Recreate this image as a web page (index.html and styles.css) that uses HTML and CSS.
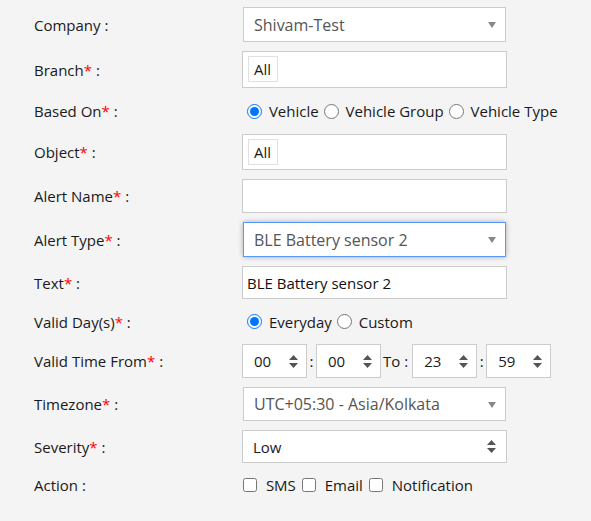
FILE: index.html
```html
<!DOCTYPE html>
<html lang="en">

<head>
    <meta charset="UTF-8">
    <meta name="viewport" content="width=device-width, initial-scale=1.0">
    <title>Add Alert</title>
    <link rel="stylesheet" href="styles.css">
</head>

<body>
    <form class="alert-form">
        <div class="form-row h35">
            <label class="form-label">Company :</label>
            <div class="select2 inset">
                <span class="select2-text">Shivam-Test</span>
                <span class="select2-arrow"></span>
            </div>
        </div>

        <div class="form-row h37">
            <label class="form-label">Branch<span class="req">*</span> :</label>
            <div class="multi-select">
                <span class="tag">All</span>
            </div>
        </div>

        <div class="form-row h28">
            <label class="form-label">Based On<span class="req">*</span> :</label>
            <div class="choice-group">
                <label class="choice"><input type="radio" name="based" checked> Vehicle</label>
                <label class="choice"><input type="radio" name="based"> Vehicle Group</label>
                <label class="choice"><input type="radio" name="based"> Vehicle Type</label>
            </div>
        </div>

        <div class="form-row h36">
            <label class="form-label">Object<span class="req">*</span> :</label>
            <div class="multi-select">
                <span class="tag">All</span>
            </div>
        </div>

        <div class="form-row h34">
            <label class="form-label">Alert Name<span class="req">*</span> :</label>
            <input class="text-input" type="text">
        </div>

        <div class="form-row h35">
            <label class="form-label">Alert Type<span class="req">*</span> :</label>
            <div class="select2 inset focused">
                <span class="select2-text">BLE Battery sensor 2</span>
                <span class="select2-arrow"></span>
            </div>
        </div>

        <div class="form-row h33">
            <label class="form-label">Text<span class="req">*</span> :</label>
            <input class="text-input" type="text" value="BLE Battery sensor 2">
        </div>

        <div class="form-row h27">
            <label class="form-label">Valid Day(s)<span class="req">*</span> :</label>
            <div class="choice-group">
                <label class="choice"><input type="radio" name="days" checked> Everyday</label>
                <label class="choice"><input type="radio" name="days"> Custom</label>
            </div>
        </div>

        <div class="form-row h34">
            <label class="form-label">Valid Time From<span class="req">*</span> :</label>
            <div class="time-group">
                <div class="spin-box"><span>00</span>
                    <svg class="spin" width="9" height="13" viewBox="0 0 9 13"><path d="M4.5 0 L9 5 H0 Z M0 8 H9 L4.5 13 Z" fill="#555"/></svg>
                </div>
                <span class="sep">:</span>
                <div class="spin-box"><span>00</span>
                    <svg class="spin" width="9" height="13" viewBox="0 0 9 13"><path d="M4.5 0 L9 5 H0 Z M0 8 H9 L4.5 13 Z" fill="#555"/></svg>
                </div>
                <span class="to">To :</span>
                <div class="spin-box"><span>23</span>
                    <svg class="spin" width="9" height="13" viewBox="0 0 9 13"><path d="M4.5 0 L9 5 H0 Z M0 8 H9 L4.5 13 Z" fill="#555"/></svg>
                </div>
                <span class="sep">:</span>
                <div class="spin-box"><span>59</span>
                    <svg class="spin" width="9" height="13" viewBox="0 0 9 13"><path d="M4.5 0 L9 5 H0 Z M0 8 H9 L4.5 13 Z" fill="#555"/></svg>
                </div>
            </div>
        </div>

        <div class="form-row h34">
            <label class="form-label">Timezone<span class="req">*</span> :</label>
            <div class="select2 inset">
                <span class="select2-text">UTC+05:30 - Asia/Kolkata</span>
                <span class="select2-arrow"></span>
            </div>
        </div>

        <div class="form-row h33">
            <label class="form-label">Severity<span class="req">*</span> :</label>
            <div class="native-select">
                <span>Low</span>
                <svg class="spin" width="9" height="13" viewBox="0 0 9 13"><path d="M4.5 0 L9 5 H0 Z M0 8 H9 L4.5 13 Z" fill="#555"/></svg>
            </div>
        </div>

        <div class="form-row h25">
            <label class="form-label">Action :</label>
            <div class="choice-group checks">
                <label class="choice"><input type="checkbox"> SMS</label>
                <label class="choice"><input type="checkbox"> Email</label>
                <label class="choice"><input type="checkbox"> Notification</label>
            </div>
        </div>
    </form>
</body>

</html>
```

FILE: styles.css
```css
body {
    margin: 0;
    padding: 7px 0 0 34px;
    background-color: #f4f4f4;
    font-family: "Open Sans", Arial, sans-serif;
    font-size: 15px;
    color: #1a1a1a;
}

.alert-form {
    display: flex;
    flex-direction: column;
    gap: 9px;
}

.form-row {
    display: flex;
    align-items: center;
}

.h25 { height: 25px; }
.h27 { height: 27px; }
.h28 { height: 28px; }
.h33 { height: 33px; }
.h34 { height: 34px; }
.h35 { height: 35px; }
.h36 { height: 36px; }
.h37 { height: 37px; }

.form-label {
    width: 208px;
    flex-shrink: 0;
}

.req {
    color: #ff0000;
}

.select2,
.multi-select,
.text-input,
.native-select,
.spin-box {
    box-sizing: border-box;
    height: 100%;
    background-color: #ffffff;
    border: 1px solid #cccccc;
}

.select2 {
    width: 263px;
    display: flex;
    align-items: center;
    justify-content: space-between;
    padding: 0 9px 0 10px;
    color: #555555;
    font-size: 16px;
}

.inset {
    margin-left: 1px;
}

.focused {
    border-color: #5897fb;
    box-shadow: 0 0 5px rgba(0, 0, 0, 0.3);
}

.select2-arrow {
    width: 0;
    height: 0;
    border-left: 4px solid transparent;
    border-right: 4px solid transparent;
    border-top: 6px solid #888888;
    margin-top: 1px;
}

.multi-select {
    width: 265px;
    padding: 4px 0 0 5px;
}

.tag {
    display: inline-block;
    box-sizing: border-box;
    height: 26px;
    line-height: 24px;
    padding: 0 6px 0 5px;
    border: 1px solid #e0e0e0;
    background-color: #ffffff;
}

.text-input {
    width: 265px;
    padding: 0 4px;
    font: inherit;
    color: #111111;
    outline: none;
}

.native-select {
    width: 265px;
    display: flex;
    align-items: center;
    justify-content: space-between;
    padding: 0 10px 0 10px;
}

.choice-group {
    display: flex;
    align-items: center;
    padding-left: 5px;
}

.choice {
    display: flex;
    align-items: center;
    white-space: pre;
    margin-right: 5px;
}

.choice input[type="radio"] {
    width: 15px;
    height: 15px;
    margin: 0 3px 0 0;
}

.checks {
    padding-left: 1px;
}

.checks .choice {
    margin-right: 6px;
}

.choice input[type="checkbox"] {
    width: 14px;
    height: 14px;
    margin: 0 5px 0 0;
}

.time-group {
    display: flex;
    align-items: center;
    height: 100%;
}

.spin-box {
    width: 65px;
    display: flex;
    align-items: center;
    justify-content: space-between;
    padding: 0 8px 0 11px;
}

.sep {
    width: 9px;
    text-align: center;
}

.to {
    margin: 0 4px 0 2px;
}
```
